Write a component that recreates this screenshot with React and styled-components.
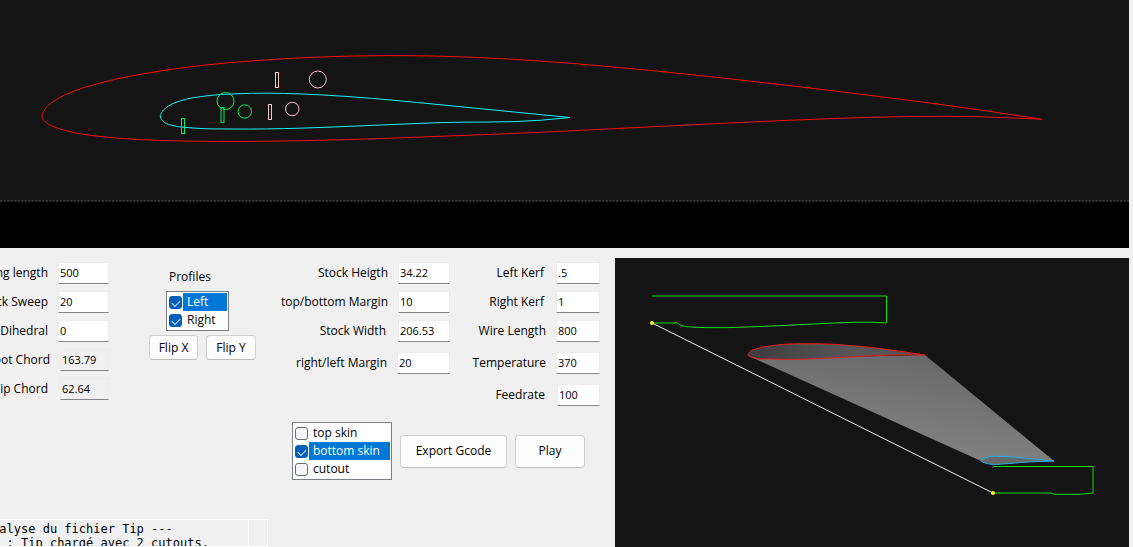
import { useState } from "react";
import styled, { createGlobalStyle } from "styled-components";

const GlobalStyle = createGlobalStyle`
    * {
        box-sizing: border-box;
    }

    body {
        margin: 0;
        background-color: #f0f0f0;
        color: #000;
        font-family: "Open Sans", "Noto Sans", sans-serif;
        font-size: 12px;
        line-height: 18px;
    }
`;

const Window = styled.main`
    display: flex;
    flex-direction: column;
    height: 100vh;
    overflow: hidden;
    padding-right: 4px;
`;

const Stage = styled.section`
    flex: none;
    background-color: #000;
    padding-bottom: 46px;
`;

const ProfileDrawing = styled.svg`
    display: block;
    width: 100%;
    height: auto;
    background-color: #141414;
    fill: none;
`;

const Workspace = styled.div`
    display: flex;
    flex: 1;
    gap: 15px;
    min-height: 0;
`;

const Controls = styled.div`
    display: flex;
    flex: none;
    flex-direction: column;
    padding-top: 14px;
`;

const Settings = styled.div`
    display: flex;
    align-items: flex-start;
`;

const Fields = styled.div`
    display: flex;
    flex-direction: column;
    width: ${props => props.$width}px;
    margin-right: ${props => props.$after || 0}px;
`;

const Row = styled.div`
    display: flex;
    justify-content: flex-end;
    align-items: center;
    gap: ${props => props.$gap}px;
    height: 22px;
    margin-bottom: ${props => props.$space}px;
`;

const FieldLabel = styled.label`
    flex: none;
    white-space: nowrap;
`;

const Input = styled.input`
    flex: none;
    width: ${props => props.$width}px;
    height: 22px;
    padding: 0 1px 2px;
    border: 1px solid #ececec;
    border-bottom-color: #868686;
    background-color: ${props => (props.readOnly ? "#f0f0f0" : "#fff")};
    color: #000;
    font-family: inherit;
    font-size: 11px;
    outline: none;
`;

const Profiles = styled.div`
    display: flex;
    flex-direction: column;
    align-items: flex-start;
    width: 107px;
    margin: 6px 28px 0 40px;
`;

const Title = styled.span`
    margin: 0 0 5px 20px;
`;

const ListBox = styled.div`
    width: ${props => props.$width}px;
    margin-left: ${props => props.$indent || 0}px;
    padding: 1px;
    border: 1px solid #7a7f88;
    background-color: #fff;
`;

const Item = styled.label`
    display: flex;
    align-items: center;
    gap: 1px;
    height: 18px;
    padding-left: 1px;
    line-height: 17px;
`;

const ItemName = styled.span`
    flex: 1;
    height: 18px;
    padding-left: 4px;
    background-color: ${props => (props.$selected ? "#0078d7" : "transparent")};
    color: ${props => (props.$selected ? "#fff" : "#000")};
    white-space: nowrap;
`;

const Tick = styled.input`
    appearance: none;
    display: flex;
    justify-content: center;
    flex: none;
    width: 13px;
    height: 13px;
    margin: 0;
    border: 1px solid #6b6b6b;
    border-radius: 3px;
    background-color: #f6f6f6;

    &:checked {
        border-color: #005fb8;
        background-color: #005fb8;
    }

    &:checked::before {
        content: "";
        width: 7px;
        height: 4px;
        margin-top: 3px;
        border: solid #dcebfa;
        border-width: 0 0 1px 1px;
        transform: rotate(-45deg);
    }
`;

const Buttons = styled.div`
    display: flex;
    gap: 8px;
    margin-top: 4px;
`;

const Button = styled.button`
    width: ${props => props.$width}px;
    height: ${props => (props.$large ? 33 : 25)}px;
    padding: 0 0 1px;
    border: 1px solid #d0d0d0;
    border-bottom-color: #bcbcbc;
    border-radius: 4px;
    background-color: #fdfdfd;
    color: #000;
    font-family: inherit;
    font-size: 12px;
`;

const Actions = styled.div`
    display: flex;
    align-items: center;
    gap: 8px;
    padding-left: 292px;
    margin-top: 15px;
`;

const Console = styled.div`
    flex: 1;
    display: flex;
    width: 268px;
    min-height: 0;
    margin-top: 39px;
    border: 1px solid #fff;
    border-left: none;
`;

const Log = styled.textarea`
    flex: none;
    width: 293px;
    margin-left: -44px;
    padding: 2px 0;
    border: none;
    border-right: 1px solid #fff;
    background-color: #f0f0f0;
    color: #000;
    font-family: "DejaVu Sans Mono", "Liberation Mono", monospace;
    font-size: 12px;
    line-height: 14px;
    white-space: pre;
    overflow: hidden;
    resize: none;
    outline: none;
`;

const Viewer = styled.section`
    flex: 1;
    min-width: 0;
    margin-top: 10px;
    background-color: #141414;
`;

const WingDrawing = styled.svg`
    display: block;
    width: 100%;
    height: auto;
    fill: none;
`;

// Spline through a list of [x, y] points, tangents weighted by segment length
function curve(points) {
    const last = points.length - 1;
    const gap = i => Math.hypot(points[i + 1][0] - points[i][0], points[i + 1][1] - points[i][1]);
    const slope = (i, axis) => (points[i + 1][axis] - points[i][axis]) / gap(i);

    function tangent(i, axis) {
        if (i === 0) return slope(0, axis);
        if (i === last) return slope(last - 1, axis);
        const before = gap(i - 1);
        const after = gap(i);
        return (slope(i - 1, axis) * after + slope(i, axis) * before) / (before + after);
    }

    let d = `M${points[0][0]} ${points[0][1]}`;
    for (let i = 0; i < last; i++) {
        const h = gap(i) / 3;
        const [x1, y1] = points[i];
        const [x2, y2] = points[i + 1];
        d += `C${x1 + tangent(i, 0) * h} ${y1 + tangent(i, 1) * h}`;
        d += ` ${x2 - tangent(i + 1, 0) * h} ${y2 - tangent(i + 1, 1) * h}`;
        d += ` ${x2} ${y2}`;
    }
    return d;
}

const root = curve([
    [1042, 119.3], [994, 112], [899, 99], [778, 84.3], [690, 74.5],
    [607, 66.4], [540, 61], [473, 57.3], [385, 55.6], [320, 57],
    [256, 60.6], [203, 65.3], [150, 72.7], [103, 82.3], [69, 93.2],
    [53, 101.8], [44.6, 109.7], [42, 117], [45, 121.6], [53, 126.3],
    [69, 131.4], [103, 136.8], [136, 139.4], [183, 141], [250, 141.4], [350, 139.5],
    [440, 136.3], [540, 132.3], [627, 128], [729, 123], [824, 118.9],
    [910, 116.5], [975, 116.6], [1042, 119.3]
]);

const tip = curve([
    [570, 117.5], [507, 111.3], [440, 104.7], [350, 96.7], [300, 93.9], [267, 93.2],
    [236, 93.8], [207, 95.8], [180, 101], [168.5, 106], [162.3, 111.5], [160.3, 117],
    [164.3, 122.3], [173, 125.5], [193, 128], [233, 129], [300, 128.2], [350, 126.3],
    [440, 122.6], [540, 120.3], [570, 117.5]
]);

const rootSection = curve([
    [310, 97], [258, 89.7], [225, 86.7], [192, 85.7], [158, 87.5], [142, 90.7],
    [134.5, 94], [133, 97], [138, 99.5], [158, 101], [192, 101], [225, 99.5],
    [258, 97.7], [292, 96.8], [310, 97]
]);

const tipSection = curve([
    [439, 203], [418, 201], [398, 199], [382, 198.3], [372, 199.3], [366, 203],
    [371, 205.2], [392, 205.7], [408, 204.3], [439, 203]
]);

const leftCut = curve([
    [62, 65], [67, 67.6], [80, 69.2], [100, 69.7], [145, 68.5], [195, 66.2], [235, 64.4],
    [255, 64.2], [271, 65]
]);

function Field({ id, label, value, width, gap = 10, space = 7, readOnly }) {
    const [text, setText] = useState(value);

    return (
        <Row $gap={gap} $space={space}>
            <FieldLabel htmlFor={id}>{label}</FieldLabel>
            <Input
                id={id}
                $width={width}
                value={text}
                readOnly={readOnly}
                onChange={e => setText(e.target.value)}
            />
        </Row>
    );
}

function CheckItem({ name, checked = false, selected }) {
    const [on, setOn] = useState(checked);

    return (
        <Item>
            <Tick type="checkbox" checked={on} onChange={() => setOn(!on)} />
            <ItemName $selected={selected}>{name}</ItemName>
        </Item>
    );
}

function App() {
    return (
        <Window>
            <GlobalStyle />
            <Stage>
                <ProfileDrawing viewBox="0 0 1129 202">
                    <path d={root} stroke="#f40c0c" />
                    <path d={tip} stroke="#18f0f0" />
                    <g stroke="#08ec68">
                        <rect x="181.5" y="118.5" width="3" height="15" />
                        <rect x="221" y="107.5" width="3" height="15" />
                        <circle cx="225.5" cy="101" r="8.5" />
                        <circle cx="244.8" cy="111.5" r="6.7" />
                    </g>
                    <g stroke="#ffc0cb">
                        <rect x="268.5" y="104.5" width="3" height="15" />
                        <rect x="275.5" y="72.5" width="3" height="15" />
                        <circle cx="292.3" cy="109" r="6.7" />
                        <circle cx="317.8" cy="79.5" r="8.5" />
                    </g>
                    <path d="M0 201.5H1129" stroke="#000" />
                    <path d="M0 201H1129" stroke="#555" strokeDasharray="2.5 1" />
                </ProfileDrawing>
            </Stage>
            <Workspace>
                <Controls>
                    <Settings>
                        <Fields $width={109}>
                            <Field id="wing" label="Wing length" value="500" width={51} />
                            <Field id="sweep" label="Back Sweep" value="20" width={51} />
                            <Field id="dihedral" label="Dihedral" value="0" width={51} />
                            <Field id="root" label="Root Chord" value="163.79" width={49} readOnly />
                            <Field id="tip" label="Tip Chord" value="62.64" width={49} gap={12} readOnly />
                        </Fields>
                        <Profiles>
                            <Title>Profiles</Title>
                            <ListBox $width={63} $indent={17}>
                                <CheckItem name="Left" checked selected />
                                <CheckItem name="Right" checked />
                            </ListBox>
                            <Buttons>
                                <Button type="button" $width={49}>Flip X</Button>
                                <Button type="button" $width={50}>Flip Y</Button>
                            </Buttons>
                        </Profiles>
                        <Fields $width={166} $after={30}>
                            <Field id="height" label="Stock Heigth" value="34.22" width={52} />
                            <Field id="margin-y" label="top/bottom Margin" value="10" width={52} />
                            <Field id="width" label="Stock Width" value="206.53" width={52} gap={12} space={10} />
                            <Field id="margin-x" label="right/left Margin" value="20" width={53} />
                        </Fields>
                        <Fields $width={120}>
                            <Field id="kerf-left" label="Left Kerf" value=".5" width={44} gap={12} />
                            <Field id="kerf-right" label="Right Kerf" value="1" width={44} gap={12} />
                            <Field id="wire" label="Wire Length" value="800" width={44} space={10} />
                            <Field id="temperature" label="Temperature" value="370" width={44} space={10} />
                            <Field id="feedrate" label="Feedrate" value="100" width={43} gap={12} space={0} />
                        </Fields>
                    </Settings>
                    <Actions>
                        <ListBox $width={100}>
                            <CheckItem name="top skin" />
                            <CheckItem name="bottom skin" checked selected />
                            <CheckItem name="cutout" />
                        </ListBox>
                        <Button type="button" $width={107} $large>Export Gcode</Button>
                        <Button type="button" $width={70} $large>Play</Button>
                    </Actions>
                    <Console>
                        <Log
                            aria-label="Log"
                            readOnly
                            value={"--- Analyse du fichier Tip ---\nProfil : Tip chargé avec 2 cutouts."}
                        />
                    </Console>
                </Controls>
                <Viewer>
                    <WingDrawing viewBox="0 0 514 289">
                        <defs>
                            <linearGradient id="skin" x1="0.2" y1="0.9" x2="0.6" y2="0">
                                <stop offset="0" stopColor="#868686" />
                                <stop offset="1" stopColor="#686868" />
                            </linearGradient>
                            <linearGradient id="face">
                                <stop offset="0" stopColor="#3c3c3c" />
                                <stop offset="0.6" stopColor="#585858" />
                                <stop offset="1" stopColor="#505050" />
                            </linearGradient>
                        </defs>
                        <path d="M136 99L366 203L380 205.5L439 203L310 97L225 99Z" fill="url(#skin)" />
                        <path d={rootSection} fill="url(#face)" stroke="#e81c1c" />
                        <path d={tipSection} fill="#686868" stroke="#22b0f0" />
                        <g stroke="#0ae00a">
                            <path d="M37 38H271.5V65" />
                            <path d="M37 65H62" />
                            <path d={leftCut} />
                            <path d="M378 208.5H478V235L465 236.3H439L436 235H378" />
                        </g>
                        <path d="M37 65L378 235" stroke="#f0f0f0" />
                        <circle cx="37" cy="65" r="2" fill="#ffee20" />
                        <circle cx="378" cy="235" r="2" fill="#ffee20" />
                    </WingDrawing>
                </Viewer>
            </Workspace>
        </Window>
    );
}

export default App;
